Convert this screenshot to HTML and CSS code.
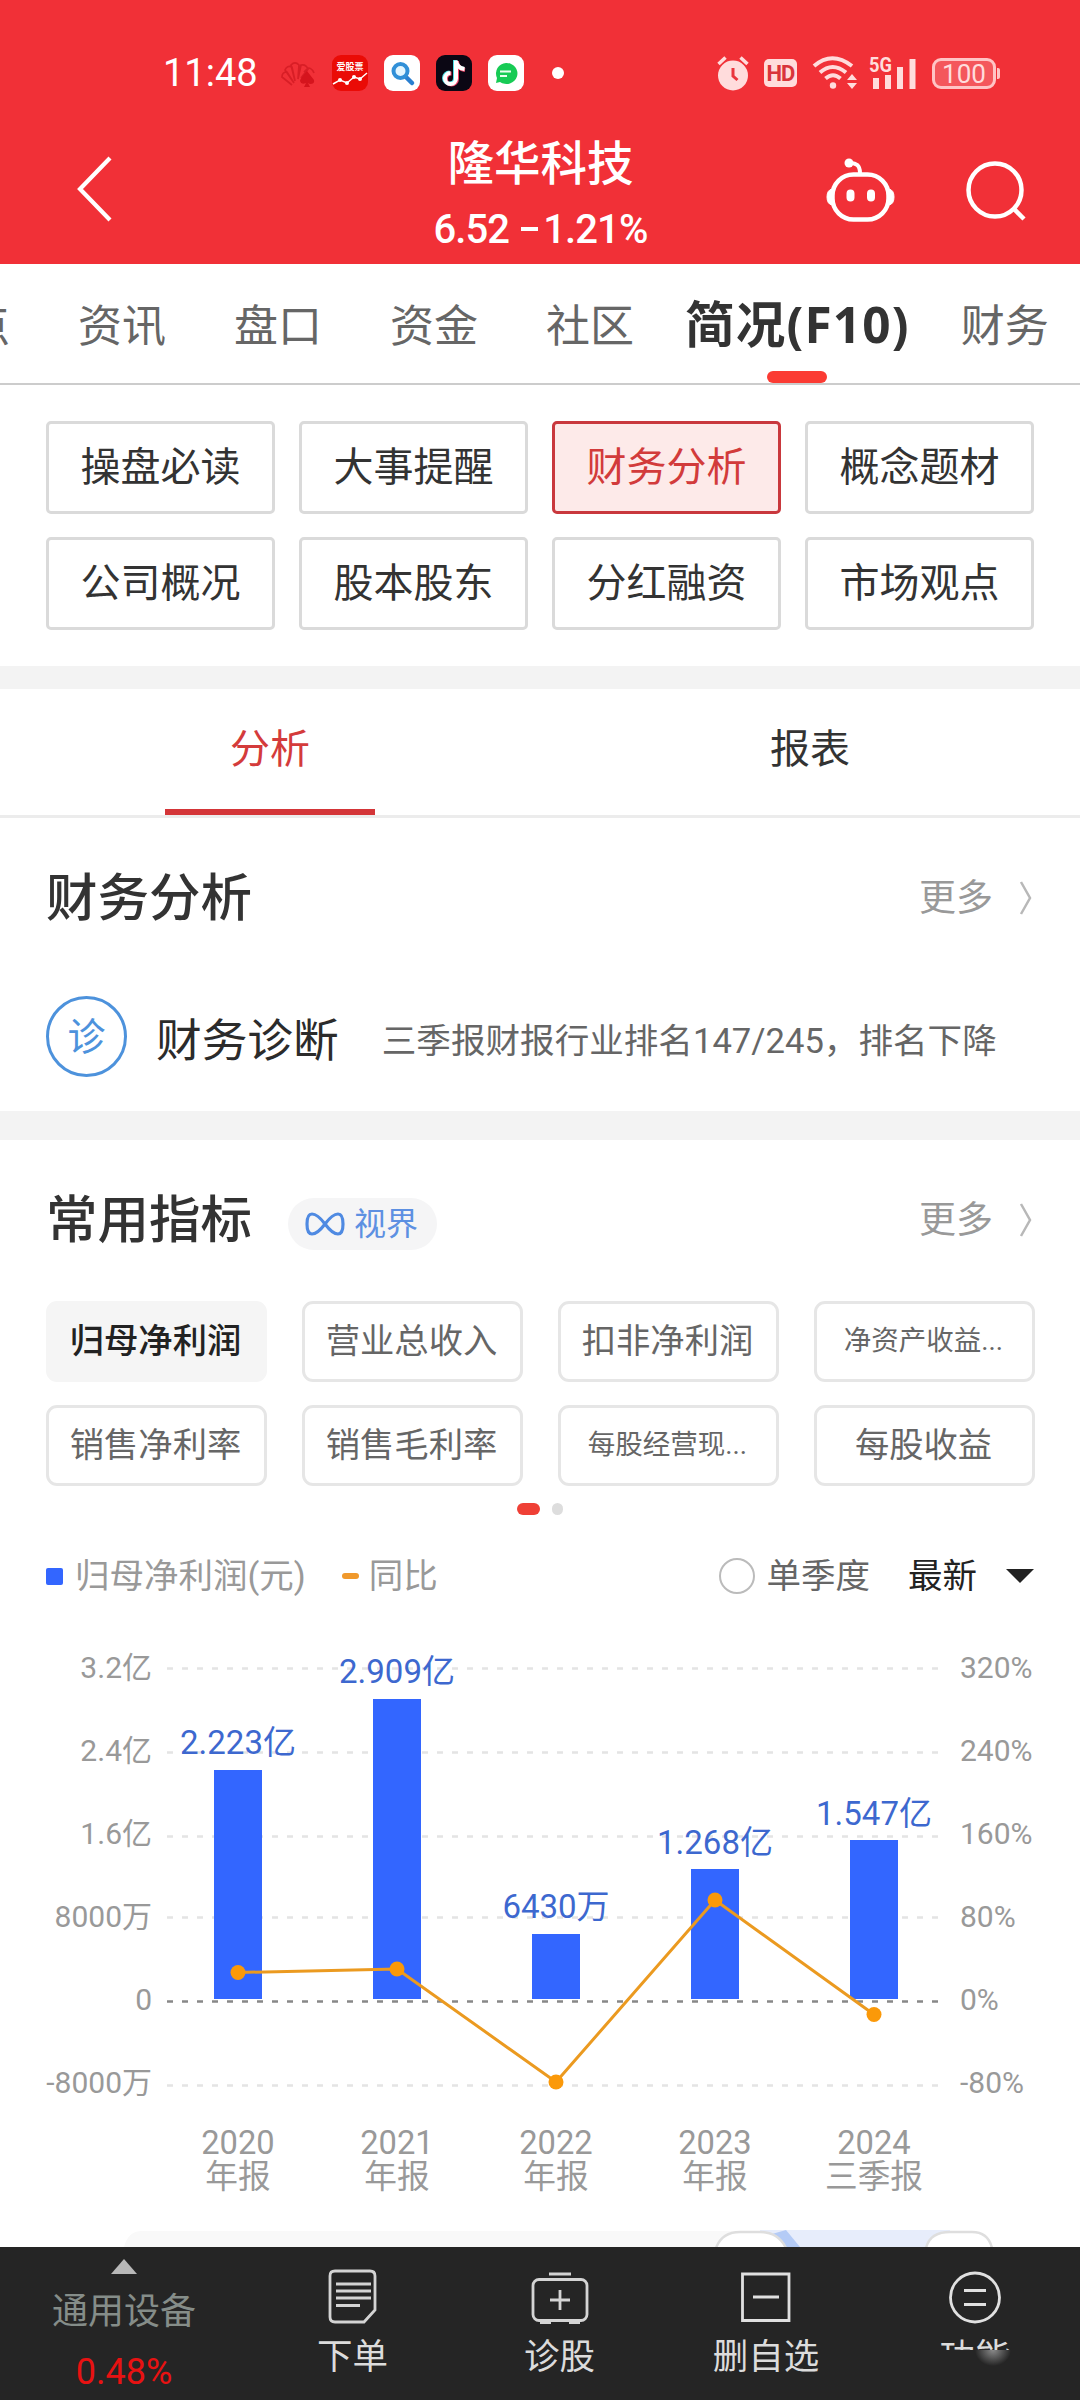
FILE: index.html
```html
<!DOCTYPE html>
<html lang="zh-CN">
<head>
<meta charset="utf-8">
<title>隆华科技</title>
<link rel="stylesheet" href="styles.css">
</head>
<body>
<div class="screen">
  <header class="top">
    <div class="status">
      <span class="clock">11:48</span>
      <svg class="app app-fan" width="36" height="36" viewBox="0 0 36 36"><g fill="none" stroke="#d81e26" stroke-width="1.7"><path d="M12 30L2 22q0-5 5-5l7 11M14 28L5 15q2-5 7-3l3 14M15 26L11 10q4-4 8 0l-1 14M18 24l3-14q5-1 7 4l-7 9M24 17l4-4q4 0 6 5"/></g><path d="M27 16l7 9q1 4-4 4l-2-1 2 4h-6l2-4q-5 2-6-2 0-2 7-10z" fill="#d5141d"/></svg>
      <svg class="app" width="36" height="36" viewBox="0 0 36 36"><rect width="36" height="36" rx="9" fill="#ea0b06"/><text x="18" y="15" text-anchor="middle" class="app-name">爱股票</text><path d="M1 29l7-4 7 3 7-6 6 2 7-6" fill="none" stroke="#fff" stroke-width="1.5"/><g fill="#fff"><circle cx="8" cy="25" r="2"/><circle cx="15" cy="28" r="2"/><circle cx="22" cy="22" r="2"/><circle cx="28" cy="24" r="2"/></g></svg>
      <svg class="app" width="36" height="36" viewBox="0 0 36 36"><rect width="36" height="36" rx="9" fill="#fff"/><path d="M21 21l7 7" stroke="#2a7fd0" stroke-width="4.5" stroke-linecap="round"/><circle cx="16.5" cy="16" r="7" fill="#e4f6ff" stroke="#3190d8" stroke-width="4"/></svg>
      <svg class="app" width="36" height="36" viewBox="0 0 36 36"><rect width="36" height="36" rx="9" fill="#0b0714"/><g fill="none" stroke-width="4"><path d="M19 5v18a5.5 5.5 0 1 1-5.5-5.500M19 6q1 7 9 8" stroke="#4fe0e6"/><path d="M21 6v18a5.500 5.500 0 1 1-5.500-5.500M21 7q1 7 8 8" stroke="#f04468"/><path d="M20 5.500v18a5.500 5.500 0 1 1-5.500-5.500M20 6q1 7 8.500 8" stroke="#fff"/></g></svg>
      <svg class="app" width="36" height="36" viewBox="0 0 36 36"><rect width="36" height="36" rx="9" fill="#fff"/><path d="M18 8a11 10.500 0 1 1-6 19l-4 1 1-5a10.500 10.500 0 0 1 9-15z" fill="#17cb55"/><path d="M12 16.500h11M12 21h7" stroke="#e9fff0" stroke-width="1.800"/></svg>
      <span class="status-dot"></span>
      <div class="signals">
        <svg class="sig-alarm" width="32" height="36" viewBox="0 0 32 36"><circle cx="16" cy="20.500" r="15" fill="#ffdcdc"/><path d="M1.500 9l7-6.500M30.500 9l-7-6.500" stroke="#ffdcdc" stroke-width="3.500"/><path d="M16 13v8l4.500 4" fill="none" stroke="#ea353c" stroke-width="3"/></svg>
        <span class="hd">HD</span>
        <svg class="sig-wifi" width="45" height="36" viewBox="0 0 45 36"><g fill="none" stroke="#ffdcdc" stroke-width="4"><path d="M2 11q18-15.500 38 0M8 17.500q12.500-11 26 0M13.500 23.500q7.500-6.500 15 0"/></g><circle cx="21" cy="30.500" r="3.200" fill="#ffdcdc"/><path d="M40 19l5 6h-10zM40 34l5-6h-10z" fill="#ffdcdc"/></svg>
        <svg class="sig-cell" width="48" height="36" viewBox="0 0 48 36"><path d="M7 34V23M19 34V20M31 34V12M43.500 34V4" stroke="#ffdcdc" stroke-width="6"/><text x="0" y="17" class="net" textLength="23" lengthAdjust="spacingAndGlyphs">5G</text></svg>
        <span class="battery">100</span>
      </div>
    </div>
    <div class="title-bar">
      <svg class="back" width="40" height="66" viewBox="0 0 40 66"><path d="M36 2L6 33l30 31" fill="none" stroke="#fff" stroke-width="4.200"/></svg>
      <div class="stock">
        <h1>隆华科技</h1>
        <p class="quote">6.52 <i class="minus"></i>1.21%</p>
      </div>
      <div class="tools">
        <svg width="72" height="68" viewBox="0 0 72 68"><rect x="7.500" y="17.500" width="56" height="45" rx="21" fill="none" stroke="#fff" stroke-width="4.500"/><path d="M7 32q-5 1-5 8t5 8zM64 32q5 1 5 8t-5 8z" fill="#fff" stroke="#fff" stroke-width="1"/><path d="M24 6q11-1 11 10" fill="none" stroke="#fff" stroke-width="4"/><circle cx="24" cy="6" r="4.500" fill="#fff"/><path d="M25.500 36.500v4M46 36.500v4" stroke="#fff" stroke-width="8" stroke-linecap="round"/></svg>
        <svg width="62" height="68" viewBox="0 0 62 68"><circle cx="30" cy="33" r="26.500" fill="none" stroke="#fff" stroke-width="4.500"/><path d="M48 51l11 11" stroke="#fff" stroke-width="4.500"/></svg>
      </div>
    </div>
  </header>

  <nav class="tabs">
    <span>热点</span><span>资讯</span><span>盘口</span><span>资金</span><span>社区</span><span class="current">简况(F10)</span><span>财务</span>
  </nav>

  <section class="topics">
    <a>操盘必读</a><a>大事提醒</a><a class="on">财务分析</a><a>概念题材</a>
    <a>公司概况</a><a>股本股东</a><a>分红融资</a><a>市场观点</a>
  </section>

  <div class="subtabs">
    <span class="on">分析</span><span>报表</span>
  </div>

  <section class="analysis">
    <div class="head">
      <h2>财务分析</h2>
      <a class="more">更多<svg width="16" height="36" viewBox="0 0 16 36"><path d="M3 2l9 16-9 16" fill="none" stroke="#b8b8b8" stroke-width="2.500"/></svg></a>
    </div>
    <div class="diagnosis">
      <span class="badge">诊</span>
      <h3>财务诊断</h3>
      <p>三季报财报行业排名147/245，排名下降</p>
    </div>
  </section>

  <section class="metrics">
    <div class="head">
      <h2>常用指标</h2>
      <span class="pill"><svg width="42" height="26" viewBox="0 0 42 26"><path d="M21 13C15 5 11 3 8 3 4 3 3 8 3 13s1 10 5 10c3 0 7-2 13-10S31 3 34 3c4 0 5 5 5 10s-1 10-5 10c-3 0-7-2-13-10z" fill="none" stroke="#4f8ae2" stroke-width="3.200"/></svg>视界</span>
      <a class="more">更多<svg width="16" height="36" viewBox="0 0 16 36"><path d="M3 2l9 16-9 16" fill="none" stroke="#b8b8b8" stroke-width="2.500"/></svg></a>
    </div>
    <div class="chips">
      <a class="on">归母净利润</a><a>营业总收入</a><a>扣非净利润</a><a class="small">净资产收益...</a>
      <a>销售净利率</a><a>销售毛利率</a><a class="small">每股经营现...</a><a>每股收益</a>
    </div>
    <div class="pager"><i class="on"></i><i></i></div>
    <div class="legend">
      <i class="key-bar"></i><span>归母净利润(元)</span>
      <i class="key-line"></i><span>同比</span>
      <i class="radio"></i><span class="quarter">单季度</span>
      <span class="latest">最新</span><i class="caret"></i>
    </div>
    <svg class="chart" width="1080" height="610" viewBox="0 1620 1080 610">
      <g class="grid">
        <path d="M167 1668.500H940M167 1752.500H940M167 1836.500H940M167 1917.500H940M167 2085.500H940"/>
        <path class="zero" d="M167 2001.500H940"/>
      </g>
      <g class="bars">
        <rect x="214" y="1770" width="48" height="229"/>
        <rect x="373" y="1699" width="48" height="300"/>
        <rect x="532" y="1934" width="48" height="65"/>
        <rect x="691" y="1869" width="48" height="130"/>
        <rect x="850" y="1840" width="48" height="159"/>
      </g>
      <path class="trend" d="M238 1972.500L397 1969L556 2082L715 1900L874 2014.500"/>
      <g class="dots">
        <circle cx="238" cy="1972.500" r="7.500"/><circle cx="397" cy="1969" r="7.500"/><circle cx="556" cy="2082" r="7.500"/><circle cx="715" cy="1900" r="7.500"/><circle cx="874" cy="2014.500" r="7.500"/>
      </g>
      <g class="values">
        <text x="238" y="1753.500">2.223亿</text><text x="397" y="1682.500">2.909亿</text><text x="556" y="1917.500">6430万</text><text x="715" y="1853.500">1.268亿</text><text x="874" y="1824.500">1.547亿</text>
      </g>
      <g class="axis left">
        <text x="152" y="1677.500">3.2亿</text><text x="152" y="1761">2.4亿</text><text x="152" y="1844">1.6亿</text><text x="152" y="1927">8000万</text><text x="152" y="2010">0</text><text x="152" y="2093">-8000万</text>
      </g>
      <g class="axis">
        <text x="960" y="1677.500">320%</text><text x="960" y="1761">240%</text><text x="960" y="1844">160%</text><text x="960" y="1927">80%</text><text x="960" y="2010">0%</text><text x="960" y="2093">-80%</text>
      </g>
      <g class="years">
        <text x="238" y="2154">2020</text><text x="397" y="2154">2021</text><text x="556" y="2154">2022</text><text x="715" y="2154">2023</text><text x="874" y="2154">2024</text>
        <text x="238" y="2188">年报</text><text x="397" y="2188">年报</text><text x="556" y="2188">年报</text><text x="715" y="2188">年报</text><text x="874" y="2188">三季报</text>
      </g>
    </svg>
    <svg class="slider" width="1080" height="17" viewBox="0 0 1080 17">
      <path d="M124 17q4-16 18-16H760v16z" fill="#f9f9f9"/>
      <rect x="760" y="0" width="190" height="17" fill="#e7edfb"/>
      <path d="M772 4l14-4 14 17h-16z" fill="#b4cbf6"/>
      <path d="M716 18q6-16 24-16h20q18 0 26 16M926 18q4-16 24-16h22q16 0 20 16" fill="#fff" stroke="#dedede" stroke-width="2.500"/>
    </svg>
  </section>

  <footer class="dock">
    <div class="sector">
      <svg width="28" height="16" viewBox="0 0 28 16"><path d="M14 1l13 15H1z" fill="#b8b8b8"/></svg>
      <span>通用设备</span>
      <b>0.48%</b>
    </div>
    <div class="action">
      <svg width="60" height="60" viewBox="0 0 60 60"><g fill="none" stroke="#d4d4d4" stroke-width="2.800"><path d="M12 4h35q5 0 5 5v34L41 55H12q-5 0-5-5V9q0-5 5-5zM13 17h35M13 24h35M13 31h35M13 38.500h24"/></g></svg>
      <span>下单</span>
    </div>
    <div class="action">
      <svg width="60" height="60" viewBox="0 0 60 60"><g fill="none" stroke="#d4d4d4" stroke-width="2.800"><rect x="3" y="12.500" width="54" height="41" rx="6"/><path d="M19 7h22M30 23v20M20 33h20M10 55.500h11M39 55.500h11"/></g></svg>
      <span>诊股</span>
    </div>
    <div class="action">
      <svg width="60" height="60" viewBox="0 0 60 60"><g fill="none" stroke="#e0e0e0" stroke-width="2.800"><path d="M6.500 7h46.500v46.500H6.500zM17 30h26"/></g></svg>
      <span>删自选</span>
    </div>
    <div class="action faded">
      <svg width="60" height="60" viewBox="0 0 60 60"><g fill="none" stroke="#e0e0e0" stroke-width="2.800"><circle cx="30" cy="30.500" r="24.500"/><path d="M19 23.500h22M19 37.500h22"/></g></svg>
      <span>功能</span>
    </div>
  </footer>
</div>
</body>
</html>
```
FILE: styles.css
```css
* { box-sizing: border-box; }
body, h1, h2, h3, p { margin: 0; }
body {
  background: #fff;
  font-family: Roboto, "Noto Sans CJK SC", sans-serif;
  color: #333;
}
h1, h2, h3 { font-weight: 500; }
svg { display: block; flex: none; }
.screen { width: 1080px; height: 2400px; overflow: hidden; display: flex; flex-direction: column; line-height: 1; }
.screen > * { flex: none; }

.top { height: 264px; background: #f13037; color: #fff; }
.status { height: 130px; padding: 16px 84px 0 163px; display: flex; align-items: center; }
.clock { width: 117px; font-size: 38px; }
.app { margin-right: 16px; }
.app-name { font-size: 9px; font-weight: 700; fill: #fff; }
.status-dot { width: 12px; height: 12px; border-radius: 50%; background: #fff; margin-left: 12px; }
.signals { margin-left: auto; display: flex; align-items: center; color: #ffdcdc; }
.hd { width: 33px; height: 28px; margin-left: 15px; border-radius: 5px; background: #ffdcdc; color: #d9343b; font-size: 22px; font-weight: 700; line-height: 29px; text-align: center; letter-spacing: -1px; }
.sig-wifi { margin-left: 15px; }
.sig-cell { margin-left: 12px; }
.net { font-size: 21px; font-weight: 700; fill: #ffdcdc; }
.battery { position: relative; width: 64px; height: 31px; margin-left: 15px; border: 3px solid #ffc4c5; border-radius: 9px; background: #f4575c; font-size: 26px; line-height: 26px; text-align: center; }
.battery::after { content: ""; position: absolute; right: -7px; top: 7px; width: 3px; height: 11px; border-radius: 0 2px 2px 0; background: #ffc4c5; }
.title-bar { height: 134px; padding: 0 53px 0 74px; display: grid; grid-template-columns: 1fr 300px 1fr; align-items: start; }
.back { margin-top: 26px; }
.stock { margin-left: -20px; text-align: center; }
.stock h1 { font-size: 46.500px; line-height: 60px; margin-top: 4px; }
.quote { font-size: 40px; font-weight: 500; line-height: 60px; margin-top: 6px; letter-spacing: -0.900px; }
.minus { display: inline-block; width: 17px; height: 4px; margin: 0 5px 0 3px; background: #fff; vertical-align: 12px; }
.tools { display: flex; justify-content: flex-end; gap: 68px; margin-top: 27px; }

.tabs { height: 121px; border-bottom: 2px solid #ccc; display: flex; align-items: center; gap: 68px; margin-left: -78px; padding-top: 6px; font-size: 44px; color: #666; white-space: nowrap; }
.tabs .current { position: relative; margin: -4px -17px 0; color: #333; font-size: 49.500px; font-weight: 700; font-family: "Noto Sans", "Noto Sans CJK SC", sans-serif; letter-spacing: 1.200px; }
.tabs .current::after { content: ""; position: absolute; left: 50%; bottom: -34px; width: 60px; height: 12px; margin-left: -30px; border-radius: 6px; background: #fb3b33; }

.topics { padding: 36px 46px; display: grid; grid-template-columns: repeat(4, 229px); grid-auto-rows: 93px; gap: 23px 24px; height: 281px; justify-content: space-between; }
.topics a { border: 3px solid #dadada; border-radius: 5px; display: flex; align-items: center; justify-content: center; font-size: 40px; }
.topics .on { background: #fdeae9; border-color: #c9383d; color: #d23b3b; }

.subtabs { height: 152px; border-top: 23px solid #f3f3f3; border-bottom: 3px solid #ececec; display: grid; grid-template-columns: 1fr 1fr; text-align: center; font-size: 40px; line-height: 121px; }
.subtabs .on { color: #d43b3b; width: 210px; height: 126px; justify-self: center; border-bottom: 6px solid #d43538; }

.analysis { height: 322px; padding-top: 42px; border-bottom: 29px solid #f3f3f3; }
.head { height: 76px; padding: 0 46px; display: flex; align-items: center; }
.head h2 { font-size: 51.500px; padding-top: 2px; }
.more { margin-left: auto; display: flex; align-items: center; gap: 25px; font-size: 37px; color: #999; }
.diagnosis { height: 81px; margin-top: 60px; padding: 0 46px; display: flex; align-items: center; }
.badge { width: 81px; height: 81px; margin-right: 29px; border: 3px solid #4d92dc; border-radius: 50%; color: #4d92dc; font-size: 38px; line-height: 76px; text-align: center; }
.diagnosis h3 { font-size: 45.700px; font-weight: 400; color: #2b2b2b; padding-top: 10px; margin-right: 43px; }
.diagnosis p { font-size: 34.600px; color: #666; padding-top: 10px; white-space: nowrap; }

.metrics { height: 1107px; padding-top: 42px; }
.pill { width: 149px; height: 52px; margin: 7px 0 0 36px; padding-left: 16px; border-radius: 26px; background: #f5f5f6; display: flex; align-items: center; gap: 8px; font-size: 32px; color: #5d90e2; }
.chips { margin-top: 43px; padding: 0 45px 0 46px; display: grid; grid-template-columns: repeat(4, 221px); grid-auto-rows: 81px; row-gap: 23px; justify-content: space-between; }
.chips a { border: 3px solid #e6e6e6; border-radius: 11px; display: flex; align-items: center; justify-content: center; padding: 0 2px 1px 0; font-size: 34.300px; color: #666; white-space: nowrap; }
.chips .on { border-color: #f5f5f5; background: #f5f5f5; color: #222; font-weight: 500; }
.chips .small { font-size: 27.500px; }
.pager { height: 12px; margin-top: 17px; display: flex; justify-content: center; gap: 12px; }
.pager i { width: 11px; height: 12px; border-radius: 6px; background: #ddd; }
.pager .on { width: 23px; background: #ef4036; }
.legend { height: 60px; margin-top: 31px; padding: 0 46px; display: flex; align-items: center; font-size: 34.500px; color: #999; }
.key-bar { width: 17px; height: 17px; margin-right: 12px; border-radius: 2px; background: #3366ff; }
.key-line { width: 17px; height: 6px; margin: 0 10px 0 36px; border-radius: 3px; background: #f0992c; }
.radio { width: 36px; height: 36px; margin: 0 12px 0 auto; border: 2px solid #bbb; border-radius: 50%; }
.quarter { color: #666; margin-right: 38px; }
.latest { color: #222; margin-right: 29px; }
.caret { border: 14.500px solid transparent; border-top-color: #222; border-bottom: 0; }
.chart { margin-top: 14px; }
.grid path { fill: none; stroke: #e4e4e4; stroke-width: 2.500; stroke-dasharray: 6 9; }
.grid .zero { stroke: #888; }
.bars { fill: #3366ff; }
.trend { fill: none; stroke: #eb9a20; stroke-width: 3; }
.dots { fill: #fb9909; }
.values { fill: #3d68cf; font-size: 33px; text-anchor: middle; }
.axis { fill: #999; font-size: 30px; }
.left { text-anchor: end; }
.years { fill: #999; font-size: 32.700px; text-anchor: middle; }

.dock { height: 153px; background: #252525; display: grid; grid-template-columns: 248px 209px 205px 208px 210px; color: #dcdcdc; }
.sector { display: flex; flex-direction: column; align-items: center; padding-top: 11px; font-size: 36px; color: #858d89; }
.sector span { margin-top: 16px; line-height: 44px; }
.sector b { margin-top: 16px; line-height: 44px; font-weight: 400; color: #e81212; }
.action { position: relative; display: flex; flex-direction: column; align-items: center; padding-top: 20px; font-size: 35.500px; }
.action span { margin-top: 8px; line-height: 44px; }
.faded::after { content: ""; position: absolute; left: 20px; right: 10px; top: 103px; height: 40px; background: radial-gradient(ellipse 18px 16px at 103px 0, #8a8a8a, rgba(37,37,37,0)), #252525; }
```
